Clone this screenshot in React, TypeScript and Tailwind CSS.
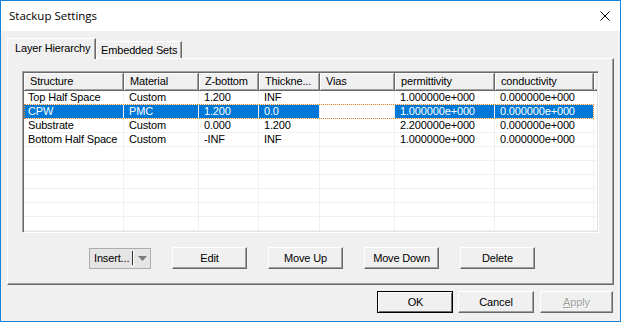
import React from "react";

const cols = [
  { name: "Structure", w: "w-[100px]", pad: "pl-[4px]" },
  { name: "Material", w: "w-[75px]", pad: "pl-[5px]" },
  { name: "Z-bottom", w: "w-[60px]", pad: "pl-[5px]" },
  { name: "Thickne...", w: "w-[61px]", pad: "pl-[5px]" },
  { name: "Vias", w: "w-[75px]", pad: "pl-[5px]" },
  { name: "permittivity", w: "w-[100px]", pad: "pl-[5px]" },
  { name: "conductivity", w: "w-[99px]", pad: "pl-[5px]" },
];

const rows: string[][] = [
  ["Top Half Space", "Custom", "1.200", "INF", "", "1.000000e+000", "0.000000e+000"],
  ["CPW", "PMC", "1.200", "0.0", "", "1.000000e+000", "0.000000e+000"],
  ["Substrate", "Custom", "0.000", "1.200", "", "2.200000e+000", "0.000000e+000"],
  ["Bottom Half Space", "Custom", "-INF", "INF", "", "1.000000e+000", "0.000000e+000"],
  ["", "", "", "", "", "", ""],
  ["", "", "", "", "", "", ""],
  ["", "", "", "", "", "", ""],
  ["", "", "", "", "", "", ""],
  ["", "", "", "", "", "", ""],
  ["", "", "", "", "", "", ""],
];

const raised =
  "border border-t-white border-l-white border-r-[#696969] border-b-[#696969] shadow-[inset_-1px_-1px_0_#a0a0a0] bg-[#f0f0f0]";

function Btn({ label, w = "w-[75px]" }: { label: string; w?: string }) {
  return (
    <div className={`${w} h-[22px] ${raised} flex items-center justify-center text-black`}>
      {label}
    </div>
  );
}

export default function App() {
  return (
    <div className="w-[621px] h-[322px] border border-[#1883d7] bg-[#f0f0f0] flex flex-col font-['Liberation_Sans',Arial,sans-serif] text-[11px] tracking-[-0.15px] text-black overflow-hidden">
      {/* Title bar */}
      <div className="h-[30px] bg-white flex items-center justify-between pl-[8px] pr-[10px]">
        <span className="font-['Open_Sans',sans-serif] text-[11.5px] tracking-normal text-black">Stackup Settings</span>
        <svg width="10" height="10" viewBox="0 0 10 10">
          <path d="M0.5 0.5 L9.5 9.5 M9.5 0.5 L0.5 9.5" stroke="#000" strokeWidth="1" />
        </svg>
      </div>

      {/* Body */}
      <div className="flex flex-col pl-[6px] pt-[7px]">
        {/* Tabs */}
        <div className="h-[20px] flex items-end">
          <div className="relative z-10 -mb-px h-[21px] w-[89px] border-t border-l border-t-white border-l-white border-r border-r-[#696969] shadow-[inset_-1px_0_0_#a0a0a0] bg-[#f0f0f0] flex items-center pl-[7px] pb-[2px]">
            Layer Hierarchy
          </div>
          <div className="h-[17px] w-[86px] border-t border-l border-t-white border-l-white border-r border-r-[#696969] shadow-[inset_-1px_0_0_#a0a0a0] bg-[#f0f0f0] flex items-center pl-[4px]">
            Embedded Sets
          </div>
        </div>

        {/* Panel */}
        <div className={`w-[607px] h-[227px] ${raised} flex flex-col pl-[14px] pt-[12px]`}>
          {/* List view */}
          <div className="w-[577px] h-[162px] bg-white border border-t-[#a0a0a0] border-l-[#a0a0a0] border-r-white border-b-white shadow-[inset_1px_1px_0_#696969,inset_-1px_-1px_0_#e3e3e3] p-px flex flex-col overflow-hidden">
            {/* Header */}
            <div className="flex h-[18px] shrink-0">
              {cols.map((c) => (
                <div
                  key={c.name}
                  className={`${c.w} h-[18px] shrink-0 bg-[#f0f0f0] border-r border-b border-r-[#696969] border-b-[#696969] shadow-[inset_1px_1px_0_#fff,inset_-1px_-1px_0_#a0a0a0] flex items-center pl-[6px] whitespace-nowrap overflow-hidden`}
                >
                  {c.name}
                </div>
              ))}
              <div className="flex-1 h-[18px] bg-[#f0f0f0] border-b border-b-[#696969] shadow-[inset_1px_1px_0_#fff,inset_0_-1px_0_#a0a0a0]" />
            </div>
            {/* Rows */}
            {rows.map((r, ri) => {
              const sel = ri === 1;
              return (
                <div key={ri} className="relative flex h-[14px] shrink-0 border-b border-[#f0f0f0]">
                  {cols.map((c, ci) => {
                    const blue = sel && ci !== 4;
                    return (
                      <div
                        key={ci}
                        className={`${c.w} shrink-0 border-r border-[#f0f0f0] ${c.pad} flex items-center whitespace-nowrap overflow-hidden leading-none ${
                          blue ? "bg-[#0078d7] text-white" : "text-black"
                        }`}
                      >
                        {r[ci]}
                      </div>
                    );
                  })}
                  <div className="flex-1" />
                  {sel && (
                    <div className="absolute left-0 top-[-1px] w-[570px] h-[15px] border border-dotted border-[#e08a2b]" />
                  )}
                </div>
              );
            })}
          </div>

          {/* Buttons row */}
          <div className="flex items-center mt-[14px] pl-[67px] gap-[21px]">
            <div className="w-[62px] h-[21px] border border-[#adadad] bg-[#e5e5e5] flex items-center">
              <span className="pl-[4px] w-[42px]">Insert...</span>
              <span className="w-px h-[14px] bg-[#333333]" />
              <span className="w-px h-[14px] bg-white" />
              <svg width="9" height="5" viewBox="0 0 9 5" className="ml-[4px]">
                <path d="M0 0 H9 L4.5 5 Z" fill="#7a7a7a" />
              </svg>
            </div>
            <Btn label="Edit" />
            <Btn label="Move Up" />
            <Btn label="Move Down" />
            <Btn label="Delete" />
          </div>
        </div>

        {/* Dialog buttons */}
        <div className="flex items-center justify-end mt-[6px] pr-[7px]">
          <div className="w-[76px] h-[22px] border border-[#000] bg-[#f0f0f0]">
            <div className="w-full h-full border-t border-l border-t-white border-l-white shadow-[inset_-1px_-1px_0_#696969] flex items-center justify-center">
              OK
            </div>
          </div>
          <div className="ml-[5px]">
            <Btn label="Cancel" w="w-[76px]" />
          </div>
          <div className="ml-[6px]">
            <div className={`w-[73px] h-[22px] ${raised} flex items-center justify-center text-[#a0a0a0] [text-shadow:1px_1px_0_#fff]`}>
              <span><span className="underline">A</span>pply</span>
            </div>
          </div>
        </div>
      </div>
    </div>
  );
}
